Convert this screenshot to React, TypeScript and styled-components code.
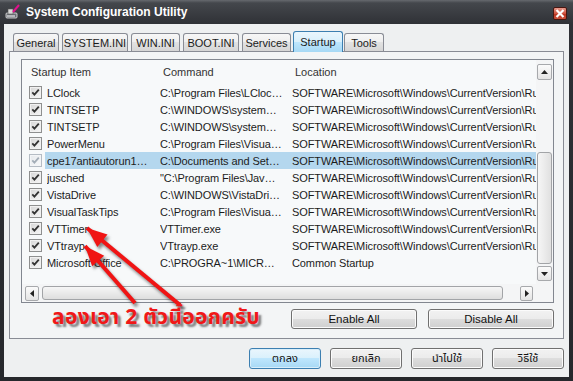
import React from 'react';
import styled, { createGlobalStyle } from 'styled-components';

const RUN = 'SOFTWARE\\Microsoft\\Windows\\CurrentVersion\\Run';

type Item = { name: string; command: string; location: string; selected?: boolean };

const items: Item[] = [
  { name: 'LClock', command: 'C:\\Program Files\\LCloc…', location: RUN },
  { name: 'TINTSETP', command: 'C:\\WINDOWS\\system…', location: RUN },
  { name: 'TINTSETP', command: 'C:\\WINDOWS\\system…', location: RUN },
  { name: 'PowerMenu', command: 'C:\\Program Files\\Visua…', location: RUN },
  { name: 'cpe17antiautorun1…', command: 'C:\\Documents and Set…', location: RUN, selected: true },
  { name: 'jusched', command: '"C:\\Program Files\\Jav…', location: RUN },
  { name: 'VistaDrive', command: 'C:\\WINDOWS\\VistaDri…', location: RUN },
  { name: 'VisualTaskTips', command: 'C:\\Program Files\\Visua…', location: RUN },
  { name: 'VTTimer', command: 'VTTimer.exe', location: RUN },
  { name: 'VTtrayp', command: 'VTtrayp.exe', location: RUN },
  { name: 'Microsoft Office', command: 'C:\\PROGRA~1\\MICR…', location: 'Common Startup' },
];

const tabs = [
  { label: 'General', w: 46 },
  { label: 'SYSTEM.INI', w: 66 },
  { label: 'WIN.INI', w: 49 },
  { label: 'BOOT.INI', w: 56 },
  { label: 'Services', w: 49 },
  { label: 'Startup', w: 50, active: true },
  { label: 'Tools', w: 40 },
];

// red hand-drawn arrows: tip -> tail
const arrows = [
  { tip: [87, 228], tail: [180, 305] },
  { tip: [85, 246], tail: [135, 303] },
];

const headPoints = (tip: number[], tail: number[]) => {
  const dx = tail[0] - tip[0];
  const dy = tail[1] - tip[1];
  const len = Math.hypot(dx, dy);
  const ux = dx / len;
  const uy = dy / len;
  const bx = tip[0] + ux * 20;
  const by = tip[1] + uy * 20;
  const px = -uy * 8;
  const py = ux * 8;
  return `${tip[0]},${tip[1]} ${bx + px},${by + py} ${bx - px},${by - py}`;
};

export default function App() {
  return (
    <>
      <GlobalStyle />
      <Window>
        <TitleBar>
          <AppIcon width="16" height="16" viewBox="0 0 16 16">
            <rect x="1" y="9" width="11" height="5" rx="1" fill="#6b6f76" stroke="#e8e8e8" strokeWidth="0.8" />
            <rect x="3" y="5" width="5" height="5" fill="#d9d9d9" stroke="#555" strokeWidth="0.6" />
            <line x1="2" y1="12" x2="10" y2="12" stroke="#fff" strokeWidth="1" />
            <line x1="8" y1="8" x2="14" y2="1" stroke="#e0128c" strokeWidth="2" />
          </AppIcon>
          <Title>System Configuration Utility</Title>
          <CloseButton>
            <svg width="10" height="9" viewBox="0 0 10 9">
              <path d="M1.5 1 L8.5 8 M8.5 1 L1.5 8" stroke="#fff" strokeWidth="2.2" />
            </svg>
          </CloseButton>
        </TitleBar>

        <Body>
          <TabStrip>
            {tabs.map((t) => (
              <Tab key={t.label} $w={t.w} $active={t.active}>
                {t.label}
              </Tab>
            ))}
          </TabStrip>

          <Panel>
            <ListBox>
              <ListArea>
                <HeaderRow>
                  <HeaderCell $pad={9}>Startup Item</HeaderCell>
                  <HeaderCell $pad={3}>Command</HeaderCell>
                  <HeaderCell $pad={3}>Location</HeaderCell>
                </HeaderRow>
                {items.map((it, i) => (
                  <Row key={i}>
                    <CheckCell>
                      <Check $dim={it.selected}>
                        <svg width="9" height="9" viewBox="0 0 9 9">
                          <path d="M1.3 4.4 L3.4 6.6 L7.8 1.6" fill="none" strokeWidth="1.8" />
                        </svg>
                      </Check>
                    </CheckCell>
                    <RowBody $selected={it.selected}>
                      <Cell>{it.name}</Cell>
                      <Cell>{it.command}</Cell>
                      <Cell>{it.location}</Cell>
                    </RowBody>
                  </Row>
                ))}
              </ListArea>

              <VScroll>
                <ScrollBtn $h={16}>
                  <svg width="7" height="4" viewBox="0 0 7 4"><polygon points="0,4 7,4 3.5,0" fill="#222" /></svg>
                </ScrollBtn>
                <VThumb />
                <ScrollBtn $h={15}>
                  <svg width="7" height="4" viewBox="0 0 7 4"><polygon points="0,0 7,0 3.5,4" fill="#222" /></svg>
                </ScrollBtn>
              </VScroll>

              <HScroll>
                <ScrollBtn $w={14} $h={15}>
                  <svg width="4" height="7" viewBox="0 0 4 7"><polygon points="4,0 4,7 0,3.5" fill="#222" /></svg>
                </ScrollBtn>
                <HThumb />
                <ScrollBtn $w={13} $h={15}>
                  <svg width="4" height="7" viewBox="0 0 4 7"><polygon points="0,0 0,7 4,3.5" fill="#222" /></svg>
                </ScrollBtn>
              </HScroll>
              <Corner />
            </ListBox>

            <PanelActions>
              <Button $w={126}>Enable All</Button>
              <Button $w={126}>Disable All</Button>
            </PanelActions>
          </Panel>

          <DialogActions>
            <Button $w={72} $h={21} $primary $thai>ตกลง</Button>
            <Button $w={72} $h={21} $thai>ยกเลิก</Button>
            <Button $w={72} $h={21} $thai>นำไปใช้</Button>
            <Button $w={72} $h={21} $thai>วิธีใช้</Button>
          </DialogActions>
        </Body>

        <Annotation>
          <svg width="573" height="381" viewBox="0 0 573 381">
            {arrows.map((a, i) => (
              <g key={i}>
                <line x1={a.tail[0]} y1={a.tail[1]} x2={a.tip[0]} y2={a.tip[1]} stroke="#f01414" strokeWidth="4" />
                <polygon points={headPoints(a.tip, a.tail)} fill="#f01414" />
              </g>
            ))}
          </svg>
          <Note>ลองเอา 2 ตัวนี้ออกครับ</Note>
        </Annotation>
      </Window>
    </>
  );
}

const GlobalStyle = createGlobalStyle`
  html, body {
    margin: 0;
    padding: 0;
    background: #2a2c31;
  }
  body {
    font-family: 'Liberation Sans', Arial, sans-serif;
  }
`;

const Window = styled.div`
  position: relative;
  width: 573px;
  height: 381px;
  box-sizing: border-box;
  padding: 0 4px 4px;
  display: flex;
  flex-direction: column;
  background: linear-gradient(#66696e 0, #44474c 3px, #2f3136 24px, #26282c 100%);
  overflow: hidden;
`;

const TitleBar = styled.div`
  height: 24px;
  display: flex;
  align-items: center;
`;

const AppIcon = styled.svg`
  margin-left: 1px;
  margin-right: 5px;
  flex: none;
`;

const Title = styled.div`
  flex: 1;
  color: #fff;
  font-family: 'Liberation Sans', Arial, sans-serif;
  font-weight: bold;
  font-size: 12px;
`;

const CloseButton = styled.div`
  width: 14px;
  height: 13px;
  margin-right: 2px;
  margin-top: 2px;
  box-sizing: border-box;
  border: 1px solid #4a1610;
  border-radius: 2px;
  background: linear-gradient(#e99a8d, #d0533f 50%, #b8301e 51%, #c9513b);
  display: flex;
  align-items: center;
  justify-content: center;
`;

const Body = styled.div`
  flex: 1;
  display: flex;
  flex-direction: column;
  padding: 7px 5px 0;
  background: #eef0f1;
`;

const TabStrip = styled.div`
  position: relative;
  z-index: 1;
  height: 20px;
  display: flex;
  align-items: flex-end;
  padding-left: 4px;
`;

const Tab = styled.div<{ $w: number; $active?: boolean }>`
  width: ${(p) => p.$w}px;
  height: ${(p) => (p.$active ? 21 : 18)}px;
  margin: ${(p) => (p.$active ? '0 1px -1px -1px' : '0 3px 0 0')};
  box-sizing: border-box;
  border: 1px solid ${(p) => (p.$active ? '#3c7fb1' : '#898c95')};
  border-bottom: none;
  border-radius: 3px 3px 0 0;
  background: ${(p) =>
    p.$active
      ? 'linear-gradient(#eaf6fd, #d9f0fc 50%, #bee6fd 50%, #a7d9f5)'
      : 'linear-gradient(#f7f7f7, #eeeeee 50%, #e2e2e2 50%, #d6d6d6)'};
  display: flex;
  align-items: center;
  justify-content: center;
  padding-top: ${(p) => (p.$active ? 0 : 1)}px;
  font-size: 11px;
  color: #1b1b1b;
  white-space: nowrap;
`;

const Panel = styled.div`
  height: 288px;
  box-sizing: border-box;
  border: 1px solid #898c95;
  padding: 7px 9px 0 11px;
  background: #f3f5f6;
  display: flex;
  flex-direction: column;
`;

const ListBox = styled.div`
  height: 244px;
  box-sizing: border-box;
  border: 1px solid #828790;
  background: #f7f9fa;
  display: grid;
  grid-template-columns: 1fr 17px;
  grid-template-rows: 1fr 18px;
`;

const ListArea = styled.div`
  overflow: hidden;
  display: flex;
  flex-direction: column;
`;

const HeaderRow = styled.div`
  height: 24px;
  flex: none;
  display: grid;
  grid-template-columns: 138px 132px 1fr;
  align-items: center;
`;

const HeaderCell = styled.div<{ $pad: number }>`
  padding-left: ${(p) => p.$pad}px;
  font-size: 11px;
  color: #333;
  white-space: nowrap;
`;

const Row = styled.div`
  height: 17px;
  flex: none;
  display: flex;
  align-items: stretch;
`;

const CheckCell = styled.div`
  width: 23px;
  flex: none;
  box-sizing: border-box;
  padding-left: 7px;
  display: flex;
  align-items: center;
`;

const Check = styled.span<{ $dim?: boolean }>`
  width: 13px;
  height: 13px;
  box-sizing: border-box;
  border: 1px solid ${(p) => (p.$dim ? '#b5bcc4' : '#8e8f8f')};
  background: ${(p) =>
    p.$dim ? 'linear-gradient(135deg, #e6e9ec, #f8f9fa)' : 'linear-gradient(135deg, #d6d6d6, #f7f7f7)'};
  box-shadow: inset 0 0 0 1px ${(p) => (p.$dim ? '#f3f5f7' : '#f1f1f1')};
  display: flex;
  align-items: center;
  justify-content: center;

  svg path {
    stroke: ${(p) => (p.$dim ? '#a3adb7' : '#333')};
  }
`;

const RowBody = styled.div<{ $selected?: boolean }>`
  flex: 1;
  display: grid;
  grid-template-columns: 113px 132px 1fr;
  align-items: center;
  padding-left: 2px;
  background: ${(p) => (p.$selected ? '#b4d7ee' : 'transparent')};
`;

const Cell = styled.div`
  font-size: 11px;
  letter-spacing: -0.1px;
  color: #1c1c1c;
  white-space: nowrap;
  overflow: hidden;
`;

const VScroll = styled.div`
  display: flex;
  flex-direction: column;
  padding: 4px 1px 3px;
  background: #f4f5f6;
`;

const ScrollBtn = styled.div<{ $w?: number; $h: number }>`
  width: ${(p) => p.$w ?? 15}px;
  height: ${(p) => p.$h}px;
  flex: none;
  box-sizing: border-box;
  border: 1px solid #a7a9ac;
  border-radius: 2px;
  background: linear-gradient(#fbfbfb, #e4e4e4);
  display: flex;
  align-items: center;
  justify-content: center;
`;

const VThumb = styled.div`
  height: 112px;
  margin: auto 0 2px;
  box-sizing: border-box;
  border: 1px solid #a2a4a7;
  border-radius: 3px;
  background: linear-gradient(to right, #f6f6f6, #e0e0e0);
`;

const HScroll = styled.div`
  display: flex;
  align-items: center;
  padding: 0 3px;
  gap: 3px;
  background: #f4f5f6;
`;

const HThumb = styled.div`
  width: 461px;
  height: 14px;
  margin-right: auto;
  box-sizing: border-box;
  border: 1px solid #a2a4a7;
  border-radius: 3px;
  background: linear-gradient(#f6f6f6, #dedede);
`;

const Corner = styled.div`
  background: #f4f5f6;
`;

const PanelActions = styled.div`
  display: flex;
  justify-content: flex-end;
  gap: 11px;
  margin-top: 6px;
`;

const DialogActions = styled.div`
  display: flex;
  justify-content: flex-end;
  gap: 9px;
  margin-top: 9px;
`;

const Button = styled.div<{ $w: number; $h?: number; $primary?: boolean; $thai?: boolean }>`
  width: ${(p) => p.$w}px;
  height: ${(p) => p.$h ?? 20}px;
  box-sizing: border-box;
  border: 1px solid ${(p) => (p.$primary ? '#3c7fb1' : '#707070')};
  border-radius: 3px;
  box-shadow: inset 0 0 0 1px ${(p) => (p.$primary ? '#d8eefa' : '#fbfbfb')};
  background: ${(p) =>
    p.$primary
      ? 'linear-gradient(#eaf6fd, #d9f0fc 50%, #bee6fd 50%, #a7d9f5)'
      : 'linear-gradient(#f2f2f2, #ebebeb 50%, #dddddd 50%, #cfcfcf)'};
  display: flex;
  align-items: center;
  justify-content: center;
  font-family: ${(p) =>
    p.$thai ? "'Noto Sans Thai', 'Loma', 'Garuda', 'Tahoma', 'DejaVu Sans', sans-serif" : "'Liberation Sans', Arial, sans-serif"};
  font-size: ${(p) => (p.$thai ? 11 : 11.5)}px;
  color: #111;
`;

const Annotation = styled.div`
  position: absolute;
  inset: 0;
  pointer-events: none;

  svg {
    position: absolute;
    left: 0;
    top: 0;
    filter: drop-shadow(2px 3px 1.5px rgba(40, 40, 40, 0.55));
  }
`;

const Note = styled.div`
  position: absolute;
  left: 52px;
  top: 303px;
  font-family: 'Noto Sans Thai', 'Loma', 'Garuda', 'Tahoma', 'DejaVu Sans', sans-serif;
  font-size: 21px;
  font-weight: bold;
  letter-spacing: 0.3px;
  line-height: 30px;
  color: #f01818;
  text-shadow: 3px 3px 2px rgba(50, 50, 50, 0.6);
  white-space: nowrap;
`;
